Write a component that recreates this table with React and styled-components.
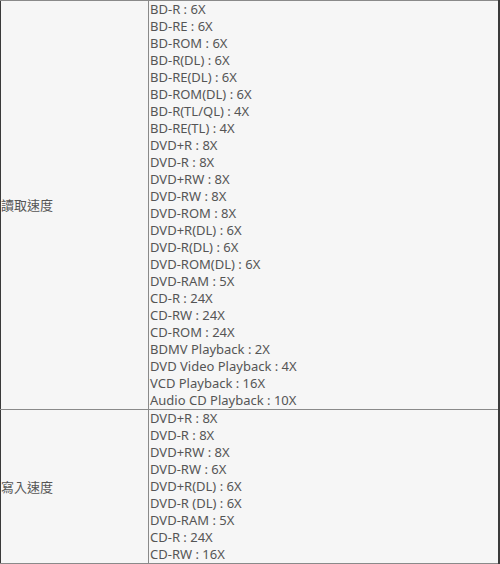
import React from "react";
import styled, { createGlobalStyle } from "styled-components";

const readSpeeds = [
  "BD-R : 6X",
  "BD-RE : 6X",
  "BD-ROM : 6X",
  "BD-R(DL) : 6X",
  "BD-RE(DL) : 6X",
  "BD-ROM(DL) : 6X",
  "BD-R(TL/QL) : 4X",
  "BD-RE(TL) : 4X",
  "DVD+R : 8X",
  "DVD-R : 8X",
  "DVD+RW : 8X",
  "DVD-RW : 8X",
  "DVD-ROM : 8X",
  "DVD+R(DL) : 6X",
  "DVD-R(DL) : 6X",
  "DVD-ROM(DL) : 6X",
  "DVD-RAM : 5X",
  "CD-R : 24X",
  "CD-RW : 24X",
  "CD-ROM : 24X",
  "BDMV Playback : 2X",
  "DVD Video Playback : 4X",
  "VCD Playback : 16X",
  "Audio CD Playback : 10X",
];

const writeSpeeds = [
  "DVD+R : 8X",
  "DVD-R : 8X",
  "DVD+RW : 8X",
  "DVD-RW : 6X",
  "DVD+R(DL) : 6X",
  "DVD-R (DL) : 6X",
  "DVD-RAM : 5X",
  "CD-R : 24X",
  "CD-RW : 16X",
];

const rows = [
  { label: "讀取速度", items: readSpeeds },
  { label: "寫入速度", items: writeSpeeds },
];

function App() {
  return (
    <>
      <GlobalStyle />
      <SpecTable>
        <tbody>
          {rows.map((row) => (
            <tr key={row.label}>
              <LabelCell>{row.label}</LabelCell>
              <ValueCell>
                {row.items.map((item) => (
                  <Line key={item}>{item}</Line>
                ))}
              </ValueCell>
            </tr>
          ))}
        </tbody>
      </SpecTable>
    </>
  );
}

const GlobalStyle = createGlobalStyle`
  body {
    margin: 0;
    background: #f6f6f6;
  }
`;

const SpecTable = styled.table`
  width: 500px;
  border-collapse: collapse;
  background: #f6f6f6;
  border-top: 1px solid #3a3a3a;
  border-left: 1px solid #3a3a3a;
  border-right: 2px solid #3a3a3a;
  font-family: "Noto Sans", "Noto Sans CJK TC", sans-serif;
  font-size: 13px;
  line-height: 17px;
  color: #555;
`;

const LabelCell = styled.td`
  width: 147px;
  padding: 1px 0 0 0;
  border: 1px solid #8a8a8a;
  border-left: 1px solid #3a3a3a;
  vertical-align: middle;
`;

const ValueCell = styled.td`
  padding: 0 0 0 1px;
  border: 1px solid #8a8a8a;
  vertical-align: top;
`;

const Line = styled.div`
  white-space: nowrap;
`;

export default App;
